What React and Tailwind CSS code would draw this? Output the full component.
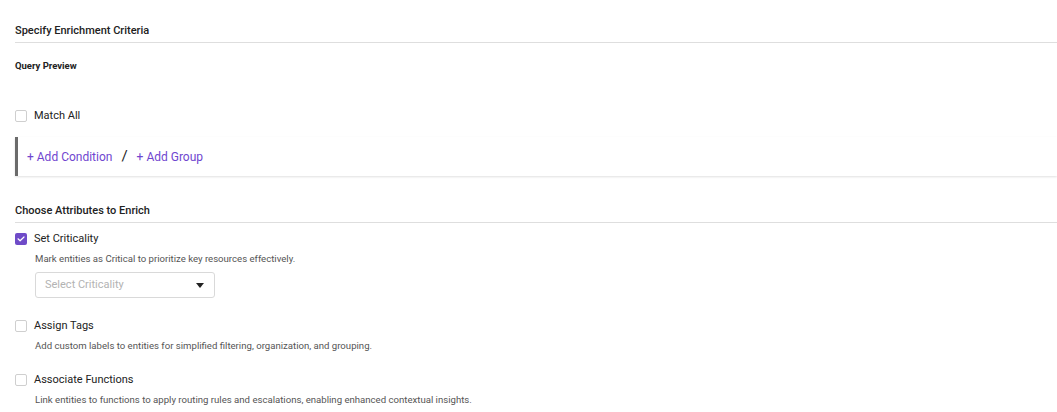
import React from "react";

function Box({ checked }) {
  if (checked) {
    return (
      <span className="flex h-[12px] w-[12px] shrink-0 items-center justify-center rounded-[2px] bg-[#6f4bc8]">
        <svg width="8" height="6" viewBox="0 0 8 6" fill="none">
          <path d="M1 2.8L3.1 4.8L7 1" stroke="white" strokeWidth="1.2" strokeLinecap="round" strokeLinejoin="round" />
        </svg>
      </span>
    );
  }
  return <span className="block h-[12px] w-[12px] shrink-0 rounded-[2px] border border-[#cfcfcf] bg-white" />;
}

function Attr({ checked, label, desc, children }) {
  return (
    <div className="flex flex-col">
      <div className="flex h-[16px] items-center gap-[7px]">
        <Box checked={checked} />
        <span className="text-[11px] text-[#222]">{label}</span>
      </div>
      <div className="mt-[6px] pl-[20px] text-[9.6px] leading-[12px] text-[#555]">{desc}</div>
      {children}
    </div>
  );
}

export default function App() {
  return (
    <div className="min-h-[412px] w-[1057px] bg-white pl-[15px] pt-[24px]" style={{ fontFamily: "Roboto, 'Liberation Sans', sans-serif" }}>
      <div className="border-b border-[#dedede] pb-[4px] text-[11px] font-medium leading-[14px] text-[#222]">Specify Enrichment Criteria</div>
      <div className="mt-[18px] text-[9.5px] font-bold leading-[10px] text-[#222]">Query Preview</div>
      <div className="mt-[37px] flex h-[16px] items-center gap-[7px]">
        <Box />
        <span className="text-[11px] text-[#222]">Match All</span>
      </div>
      <div className="mt-[13px] flex h-[39px] items-center border-l-[3px] border-[#6b6b6b] pl-[9px] shadow-[0_1px_2px_rgba(0,0,0,0.12)]">
        <span className="text-[12px] text-[#7046cf]">+ Add Condition</span>
        <span className="mx-[9px] text-[15px] leading-[15px] text-[#222]">/</span>
        <span className="text-[12px] text-[#7046cf]">+ Add Group</span>
      </div>
      <div className="mt-[28px] border-b border-[#dedede] pb-[4px] text-[11px] font-medium leading-[14px] text-[#222]">Choose Attributes to Enrich</div>
      <div className="mt-[8px] flex flex-col gap-[20px]">
        <Attr checked label="Set Criticality" desc="Mark entities as Critical to prioritize key resources effectively.">
          <div className="ml-[20px] mt-[7px] flex h-[26px] w-[180px] items-center justify-between rounded-[3px] border border-[#d9d9d9] pl-[9px] pr-[10px]">
            <span className="text-[11px] text-[#b3b3b3]">Select Criticality</span>
            <svg width="8" height="5" viewBox="0 0 8 5"><path d="M0 0H8L4 5Z" fill="#222" /></svg>
          </div>
        </Attr>
        <Attr label="Assign Tags" desc="Add custom labels to entities for simplified filtering, organization, and grouping." />
        <Attr label="Associate Functions" desc="Link entities to functions to apply routing rules and escalations, enabling enhanced contextual insights." />
      </div>
    </div>
  );
}
